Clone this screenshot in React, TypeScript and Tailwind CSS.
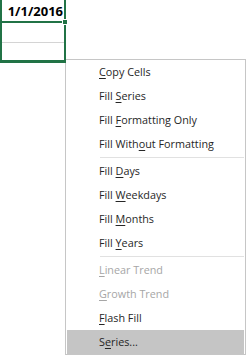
import React from "react";

type Item =
  | { kind: "item"; pre: string; u: string; post: string; disabled?: boolean; active?: boolean }
  | { kind: "sep" };

const items: Item[] = [
  { kind: "item", pre: "", u: "C", post: "opy Cells" },
  { kind: "item", pre: "Fill ", u: "S", post: "eries" },
  { kind: "item", pre: "Fill ", u: "F", post: "ormatting Only" },
  { kind: "item", pre: "Fill With", u: "o", post: "ut Formatting" },
  { kind: "sep" },
  { kind: "item", pre: "Fill ", u: "D", post: "ays" },
  { kind: "item", pre: "Fill ", u: "W", post: "eekdays" },
  { kind: "item", pre: "Fill ", u: "M", post: "onths" },
  { kind: "item", pre: "Fill ", u: "Y", post: "ears" },
  { kind: "sep" },
  { kind: "item", pre: "", u: "L", post: "inear Trend", disabled: true },
  { kind: "item", pre: "", u: "G", post: "rowth Trend", disabled: true },
  { kind: "item", pre: "", u: "F", post: "lash Fill" },
  { kind: "item", pre: "S", u: "e", post: "ries...", active: true },
];

export default function App() {
  return (
    <div className="relative w-[247px] h-[355px] bg-white overflow-hidden">
      {/* selected cell range */}
      <div className="relative z-10 w-[66px] h-[63px] border-l-2 border-r-2 border-b-[3px] border-[#217346] flex flex-col">
        <div
          className="h-[21px] flex items-end justify-end pr-[1px] pb-[1px] text-[13px] font-bold leading-none text-black"
          style={{ fontFamily: '"Open Sans", sans-serif' }}
        >
          <span className="pb-[2px]">1/1/2016</span>
        </div>
        <div className="h-[2px] bg-[#217346]" />
        <div className="h-[19px]" />
        <div className="h-[1px] bg-[#d4d4d4]" />
        <div className="flex-1" />
        <div className="absolute left-[60px] top-[19px] w-[6px] h-[6px] bg-[#217346] border border-white" />
      </div>

      {/* context menu */}
      <div
        className="absolute left-[65px] top-[59px] w-[181px] h-[296px] border border-[#c6c6c6] bg-white flex flex-col"
        style={{ fontFamily: '"Open Sans", sans-serif' }}
      >
        {items.map((it, i) =>
          it.kind === "sep" ? (
            <div key={i} className="h-[3px] flex items-center pl-[34px] pr-[1px]">
              <div className="h-[1px] w-full bg-[#e1e1e1]" />
            </div>
          ) : (
            <div
              key={i}
              className={
                "h-[24px] flex items-center pl-[32px] text-[10.8px] leading-none whitespace-nowrap " +
                (it.active ? "bg-[#c5c5c5] mx-[1px] " : "ml-[1px] ") +
                (it.disabled ? "text-[#a6a6a6]" : "text-[#262626]")
              }
            >
              <span>
                {it.pre}
                <span className="underline decoration-1 underline-offset-2">{it.u}</span>
                {it.post}
              </span>
            </div>
          )
        )}
      </div>
    </div>
  );
}
